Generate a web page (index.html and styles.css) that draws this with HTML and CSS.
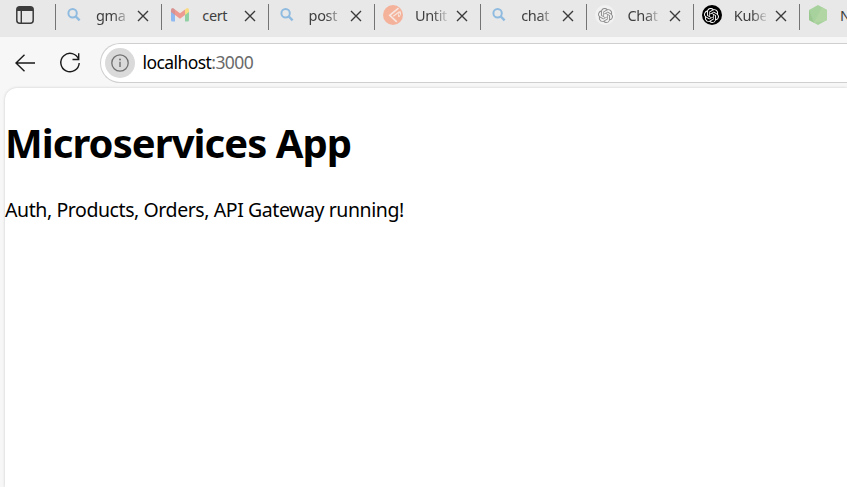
FILE: index.html
```html
<!DOCTYPE html>
<html lang="en">
<head>
<meta charset="utf-8">
<title>Microservices App</title>
<link rel="stylesheet" href="styles.css">
</head>
<body>
<svg class="defs" width="0" height="0">
  <symbol id="search" viewBox="0 0 14 14"><circle cx="5.6" cy="5.3" r="4.2" fill="none" stroke="currentColor" stroke-width="2"/><path d="M8.8 8.5 12.6 12.4" stroke="currentColor" stroke-width="2.4"/></symbol>
  <symbol id="close" viewBox="0 0 12 12"><path d="M1 1 11 11M11 1 1 11" stroke="currentColor" stroke-width="1.4"/></symbol>
  <symbol id="knot" viewBox="0 0 24 24"><path fill="currentColor" d="M22.28 9.82a5.98 5.98 0 0 0-.52-4.91 6.05 6.05 0 0 0-6.51-2.9A6.07 6.07 0 0 0 4.98 4.18a5.98 5.98 0 0 0-4 2.9 6.05 6.05 0 0 0 .74 7.1 5.98 5.98 0 0 0 .51 4.91 6.05 6.05 0 0 0 6.51 2.9A5.98 5.98 0 0 0 13.26 24a6.06 6.06 0 0 0 5.77-4.21 5.99 5.99 0 0 0 4-2.9 6.06 6.06 0 0 0-.75-7.07zm-9.02 12.61a4.48 4.48 0 0 1-2.88-1.04l.14-.08 4.78-2.76a.79.79 0 0 0 .39-.68v-6.74l2.02 1.17a.07.07 0 0 1 .04.05v5.58a4.5 4.5 0 0 1-4.49 4.5zm-9.66-4.13a4.47 4.47 0 0 1-.53-3.01l.14.08 4.78 2.76a.77.77 0 0 0 .78 0l5.84-3.37v2.33a.08.08 0 0 1-.03.06l-4.84 2.79a4.5 4.5 0 0 1-6.14-1.64zM2.34 7.9a4.49 4.49 0 0 1 2.37-1.97v5.68a.77.77 0 0 0 .39.67l5.81 3.36-2.02 1.16a.08.08 0 0 1-.07 0L3.99 14.01A4.5 4.5 0 0 1 2.34 7.87zm16.6 3.85-5.84-3.39 2.02-1.16a.08.08 0 0 1 .07 0l4.83 2.79a4.49 4.49 0 0 1-.68 8.1v-5.67a.79.79 0 0 0-.4-.67zm2.01-3.02-.14-.09-4.78-2.78a.78.78 0 0 0-.78 0L9.41 9.23V6.9a.07.07 0 0 1 .03-.06l4.83-2.79a4.5 4.5 0 0 1 6.68 4.66zM8.31 12.86l-2.02-1.16a.08.08 0 0 1-.04-.06V6.07a4.5 4.5 0 0 1 7.38-3.45l-.14.08-4.78 2.76a.79.79 0 0 0-.39.68zm1.09-2.36 2.61-1.5 2.6 1.5v3l-2.6 1.5-2.61-1.5z"/></symbol>
</svg>
<header class="tabs">
  <svg class="workspace" viewBox="0 0 18 18"><rect x=".8" y=".8" width="16.4" height="16.4" rx="3" fill="none" stroke="#3b3b3b" stroke-width="1.5"/><path d="M1 5V3.500Q1 1 3.500 1h11Q17 1 17 3.500V5z" fill="#3b3b3b"/><path d="M5.300 5v12" stroke="#3b3b3b" stroke-width="1.400"/></svg>
  <div class="tab"><span class="icon"><svg class="search"><use href="#search"/></svg></span><span class="label">gma</span><svg class="close"><use href="#close"/></svg></div>
  <div class="tab"><span class="icon"><svg class="gmail" viewBox="0 0 18 14"><path d="M0 2v10q0 1.500 1.500 1.500H4V5z" fill="#8eb9f1"/><path d="M14 5v8.500h2.500q1.500 0 1.500-1.500V2z" fill="#91d0a3"/><path d="M14 1.600V7l4-3V2q0-2-2-2z" fill="#f8db85"/><path d="M4 1.600 9 5.300l5-3.700V7l-5 3.700L4 7z" fill="#ed9b92"/><path d="M0 2v2l4 3V1.600L2 0Q0 0 0 2z" fill="#d99393"/></svg></span><span class="label plain">cert</span><svg class="close"><use href="#close"/></svg></div>
  <div class="tab"><span class="icon"><svg class="search"><use href="#search"/></svg></span><span class="label">post</span><svg class="close"><use href="#close"/></svg></div>
  <div class="tab"><span class="icon"><svg class="badge" viewBox="0 0 20 20"><circle cx="10" cy="10" r="10" fill="#f5b29b"/><path d="M15.500 3.200 6.800 10.300 13.800 16.800" fill="none" stroke="#f6e6df" stroke-width="1.700"/><path d="M10.300 11.300 16.300 6.700" stroke="#f6e6df" stroke-width="1.200"/><path d="M17 6.300q2 3.200-1.200 5.700-1.300-2.200 1.200-5.700z" fill="none" stroke="#f6e6df"/></svg></span><span class="label">Untit</span><svg class="close"><use href="#close"/></svg></div>
  <div class="tab"><span class="icon"><svg class="search"><use href="#search"/></svg></span><span class="label">chat</span><svg class="close"><use href="#close"/></svg></div>
  <div class="tab"><span class="icon disc"><svg class="knot"><use href="#knot"/></svg></span><span class="label">Chat</span><svg class="close"><use href="#close"/></svg></div>
  <div class="tab"><span class="icon disc dark"><svg class="knot"><use href="#knot"/></svg></span><span class="label">Kube</span><svg class="close"><use href="#close"/></svg></div>
  <div class="tab last"><span class="icon"><svg class="badge" viewBox="0 0 20 20"><path d="m10 0 9 5v10l-9 5-9-5V5z" fill="#a8d29d"/><path d="m1 5 5 12.800L1 15z" fill="#9bc891"/><path d="m14 2.200 5 2.800v10l-2 1.100L6 17.800z" fill="#b2d5a4"/></svg></span><span class="label plain">N</span></div>
</header>
<nav class="toolbar">
  <svg class="back" viewBox="0 0 20 18"><path d="M20 9H1M9.500.7 1 9l8.500 8.300" fill="none" stroke="#1a1a1a" stroke-width="1.400"/></svg>
  <svg class="reload" viewBox="0 0 20 20"><path d="M18.700 6.500A9.200 9.200 0 1 0 19.200 10M18.700.2v6.300H12.500" fill="none" stroke="#1a1a1a" stroke-width="1.400"/></svg>
  <div class="address">
    <span class="info"><svg viewBox="0 0 18 18"><circle cx="9" cy="9" r="8.200" fill="none" stroke="#707070" stroke-width="1.300"/><path d="M9 7.800v5.200" stroke="#707070" stroke-width="1.400"/><circle cx="9" cy="5.400" r="1" fill="#707070"/></svg></span>
    <span class="url">localhost<span class="port">:3000</span></span>
  </div>
</nav>
<main class="page">
  <h1>Microservices App</h1>
  <p>Auth, Products, Orders, API Gateway running!</p>
</main>
</body>
</html>
```
FILE: styles.css
```css
* { box-sizing: border-box; }
body {
  margin: 0;
  height: 487px;
  display: flex;
  flex-direction: column;
  overflow: hidden;
  background: #f7f7f7;
  font-family: "Noto Sans", sans-serif;
}
svg { display: block; flex: none; }
.defs { position: absolute; }
.tabs {
  height: 37px;
  flex: none;
  display: flex;
  padding: 4px 0 0 16px;
  overflow: hidden;
  background: #e8e8e8;
}
.workspace { width: 18px; height: 18px; margin: 2px 21px 0 0; }
.tab {
  width: 106.3px;
  height: 26px;
  flex: none;
  display: flex;
  align-items: center;
  padding: 0 0 4px 8px;
  border-left: 1px solid #747474;
}
.last { flex: 1; min-width: 0; width: auto; }
.icon {
  width: 20px;
  height: 20px;
  flex: none;
  display: flex;
  align-items: center;
  justify-content: center;
}
.search { width: 14px; height: 14px; color: #8fbbe0; }
.gmail { width: 18px; height: 14px; }
.badge { width: 20px; height: 20px; }
.disc { border-radius: 50%; background: #f2f2f2; color: #8b8b8b; }
.dark { background: #000; color: #fff; }
.knot { width: 15px; height: 15px; }
.label {
  width: 32px;
  flex: none;
  margin: 0 9.3px 0 12px;
  white-space: nowrap;
  font-size: 14.5px;
  line-height: 22px;
  letter-spacing: -0.35px;
  color: #3f3f3f;
  -webkit-mask-image: linear-gradient(90deg, #000 55%, rgba(0, 0, 0, 0.15));
  mask-image: linear-gradient(90deg, #000 55%, rgba(0, 0, 0, 0.15));
}
.plain { -webkit-mask-image: none; mask-image: none; }
.close { width: 12px; height: 12px; color: #3a3a3a; margin-top: 1px; }
.toolbar {
  height: 51px;
  flex: none;
  display: flex;
  align-items: center;
  padding-left: 15px;
}
.back { width: 20px; height: 18px; }
.reload { width: 20px; height: 20px; margin: 0 20px 0 25px; overflow: visible; }
.address {
  flex: 1;
  height: 40px;
  display: flex;
  align-items: center;
  padding-left: 4px;
  border: 1px solid #cfcfcf;
  border-right: 0;
  border-radius: 20px 0 0 20px;
  background: #fff;
}
.info {
  width: 30px;
  height: 30px;
  display: flex;
  align-items: center;
  justify-content: center;
  border-radius: 50%;
  background: #dadada;
}
.info svg { width: 18px; height: 18px; }
.url { margin: -2px 0 0 7.5px; font-size: 17.5px; letter-spacing: -0.57px; color: #000; }
.port { color: #6a6a6a; }
.page {
  flex: 1;
  margin-left: 5px;
  border-top-left-radius: 12px;
  background: #fff;
  box-shadow: 0 0 3px rgba(0, 0, 0, 0.18);
  color: #000;
}
h1 { margin: 28px 0 0; font-size: 40px; line-height: 54px; letter-spacing: -0.95px; }
p { margin: 26px 0 0; font-size: 19.5px; line-height: 27px; letter-spacing: -0.42px; }
```
